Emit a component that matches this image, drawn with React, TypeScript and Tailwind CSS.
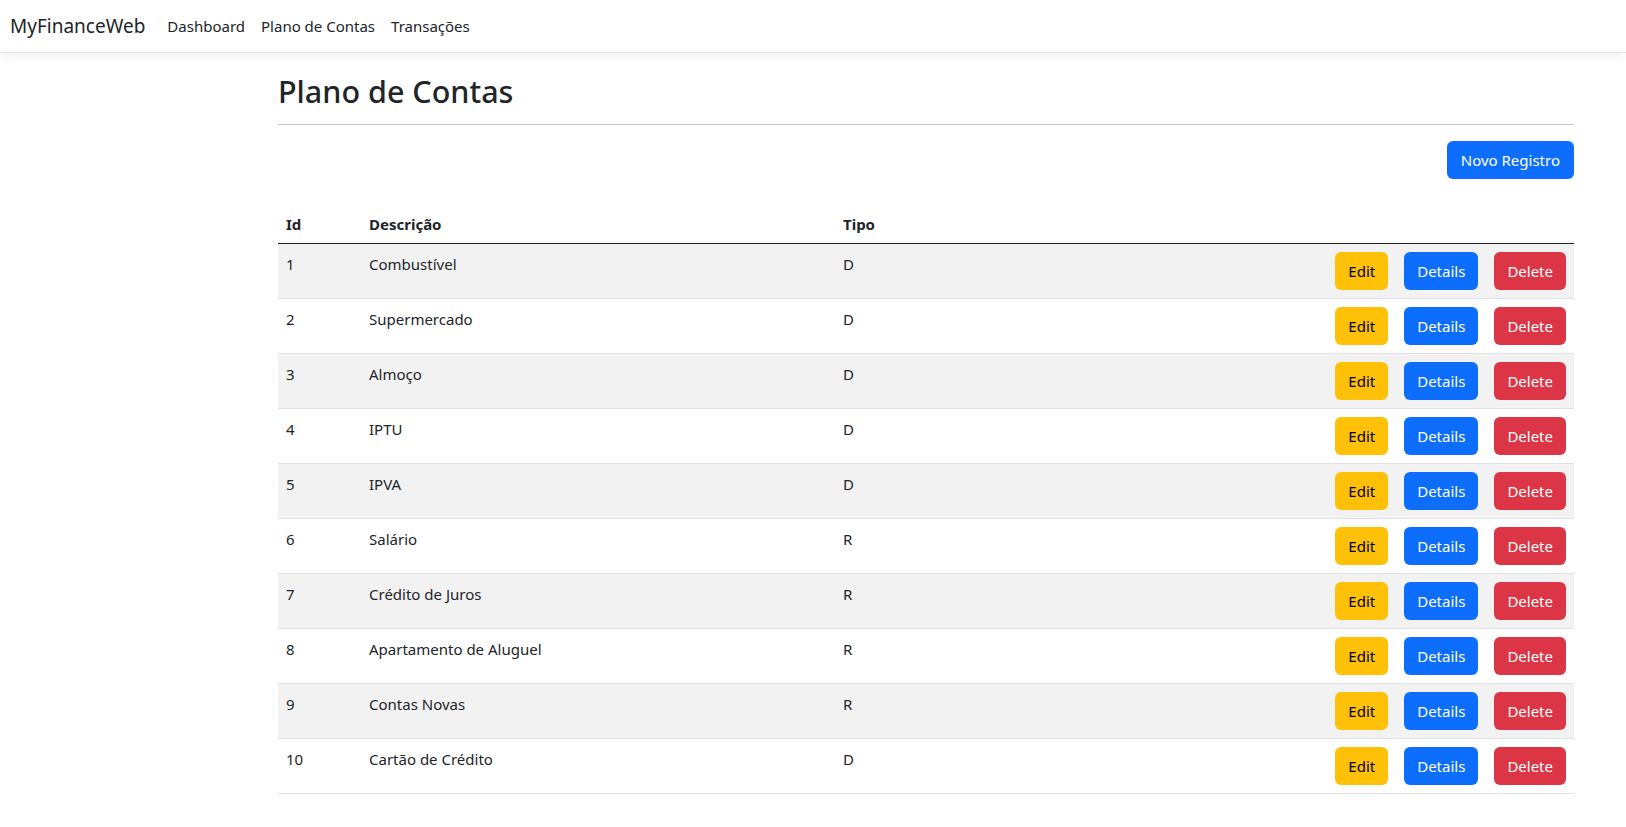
import React from 'react';

type Conta = { id: number; descricao: string; tipo: 'D' | 'R' };

const CONTAS: Conta[] = [
  { id: 1, descricao: 'Combustível', tipo: 'D' },
  { id: 2, descricao: 'Supermercado', tipo: 'D' },
  { id: 3, descricao: 'Almoço', tipo: 'D' },
  { id: 4, descricao: 'IPTU', tipo: 'D' },
  { id: 5, descricao: 'IPVA', tipo: 'D' },
  { id: 6, descricao: 'Salário', tipo: 'R' },
  { id: 7, descricao: 'Crédito de Juros', tipo: 'R' },
  { id: 8, descricao: 'Apartamento de Aluguel', tipo: 'R' },
  { id: 9, descricao: 'Contas Novas', tipo: 'R' },
  { id: 10, descricao: 'Cartão de Crédito', tipo: 'D' },
];

const NAV_LINKS = ['Dashboard', 'Plano de Contas', 'Transações'];

const COLS = 'grid grid-cols-[83px_474px_123px_1fr]';

export default function App() {
  return (
    <div className="min-h-screen bg-white text-[#212529] text-[15px] leading-6 font-['Noto_Sans',sans-serif]">
      {/* ── Navbar ── */}
      <nav className="flex items-center h-[53px] px-[10px] border-b border-[#dee2e6] shadow-[0_4px_12px_rgba(0,0,0,0.05)]">
        <span className="text-[19px] mr-[14px] leading-[30px]">MyFinanceWeb</span>
        <div className="flex">
          {NAV_LINKS.map((l) => (
            <a key={l} className="px-2 py-2 text-[#212529]">
              {l}
            </a>
          ))}
        </div>
      </nav>

      {/* ── Content ── */}
      <main className="pl-[278px] pr-[52px]">
        <div className="pt-[19px] pb-[14px] border-b border-[#c8c9ca]">
          <h2 className="text-[30.5px] font-medium leading-[38px]">Plano de Contas</h2>
        </div>

        <div className="flex justify-end mt-4">
          <button className="h-[38px] px-[14px] rounded-md bg-[#0d6efd] text-white">Novo Registro</button>
        </div>

        <div className="mt-[25px]">
          <div className={`${COLS} border-b border-[#212529] font-bold`}>
            <div className="px-2 pt-2 pb-[7px]">Id</div>
            <div className="px-2 pt-2 pb-[7px]">Descrição</div>
            <div className="px-2 pt-2 pb-[7px]">Tipo</div>
            <div />
          </div>
          {CONTAS.map((c, i) => (
            <div
              key={c.id}
              className={`${COLS} border-b border-[#dee2e6] ${i % 2 === 0 ? 'bg-[#f2f2f2]' : 'bg-white'}`}
            >
              <div className="px-2 py-2">{c.id}</div>
              <div className="px-2 py-2">{c.descricao}</div>
              <div className="px-2 py-2">{c.tipo}</div>
              <div className="flex justify-end gap-4 px-2 py-2">
                <button className="h-[38px] px-[13px] rounded-md bg-[#ffc107] text-black">Edit</button>
                <button className="h-[38px] px-[13px] rounded-md bg-[#0d6efd] text-white">Details</button>
                <button className="h-[38px] px-[13px] rounded-md bg-[#dc3545] text-white">Delete</button>
              </div>
            </div>
          ))}
        </div>
      </main>
    </div>
  );
}
